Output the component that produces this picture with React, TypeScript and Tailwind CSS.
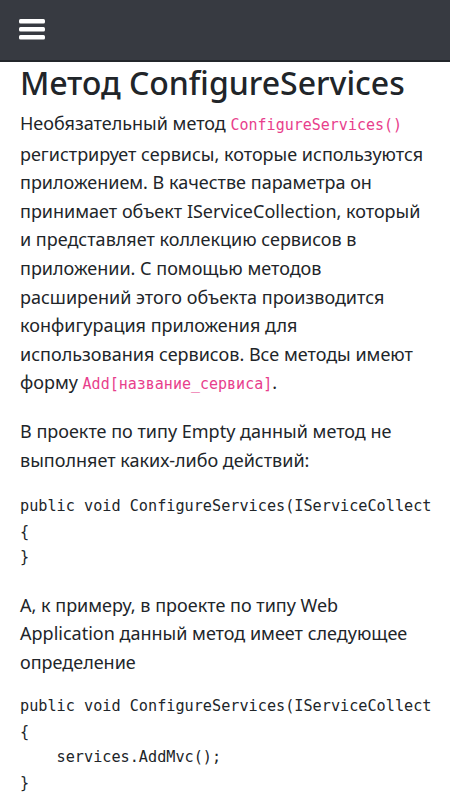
const body = { fontFamily: '"Noto Sans", "Open Sans", sans-serif' };
const mono = { fontFamily: '"DejaVu Sans Mono", "Liberation Mono", monospace' };

function Code({ children }: { children: React.ReactNode }) {
  return (
    <code className="text-[15px] text-[#e83e8c]" style={mono}>
      {children}
    </code>
  );
}

function Block({ lines }: { lines: string[] }) {
  return (
    <pre
      className="-mr-[2px] mb-[20px] overflow-hidden text-[15.2px] leading-[25.5px] text-[#212529]"
      style={mono}
    >
      {lines.join("\n")}
    </pre>
  );
}

export default function App() {
  return (
    <div className="min-h-screen bg-white text-[#212529]" style={body}>
      <header className="flex h-[62px] items-center border-b-2 border-[#23262b] bg-[#373a41] px-[18px]">
        <svg width="28" height="24" viewBox="0 0 28 24">
          <rect x="1" y="1" width="26" height="4.5" rx="1.5" fill="#fff" />
          <rect x="1" y="9" width="26" height="4.5" rx="1.5" fill="#fff" />
          <rect x="1" y="17" width="26" height="4.5" rx="1.5" fill="#fff" />
        </svg>
      </header>
      <main className="px-5 pt-[1px]">
        <h1 className="mb-[6px] text-[32px] font-medium leading-[40px]">
          Метод ConfigureServices
        </h1>
        <p className="mb-[18px] text-[18px] leading-[28.6px]">
          Необязательный метод <Code>ConfigureServices()</Code>
          <br />
          регистрирует сервисы, которые используются
          <br />
          приложением. В качестве параметра он
          <br />
          принимает объект IServiceCollection, который
          <br />
          и представляет коллекцию сервисов в
          <br />
          приложении. С помощью методов
          <br />
          расширений этого объекта производится
          <br />
          конфигурация приложения для
          <br />
          использования сервисов. Все методы имеют
          <br />
          форму <Code>Add[название_сервиса]</Code>.
        </p>
        <p className="mb-[20px] text-[18px] leading-[28.6px]">
          В проекте по типу Empty данный метод не
          <br />
          выполняет каких-либо действий:
        </p>
        <Block
          lines={[
            "public void ConfigureServices(IServiceCollection services)",
            "{",
            "}",
          ]}
        />
        <p className="mb-[18px] text-[18px] leading-[28.6px]">
          А, к примеру, в проекте по типу Web
          <br />
          Application данный метод имеет следующее
          <br />
          определение
        </p>
        <Block
          lines={[
            "public void ConfigureServices(IServiceCollection services)",
            "{",
            "    services.AddMvc();",
            "}",
          ]}
        />
      </main>
    </div>
  );
}
